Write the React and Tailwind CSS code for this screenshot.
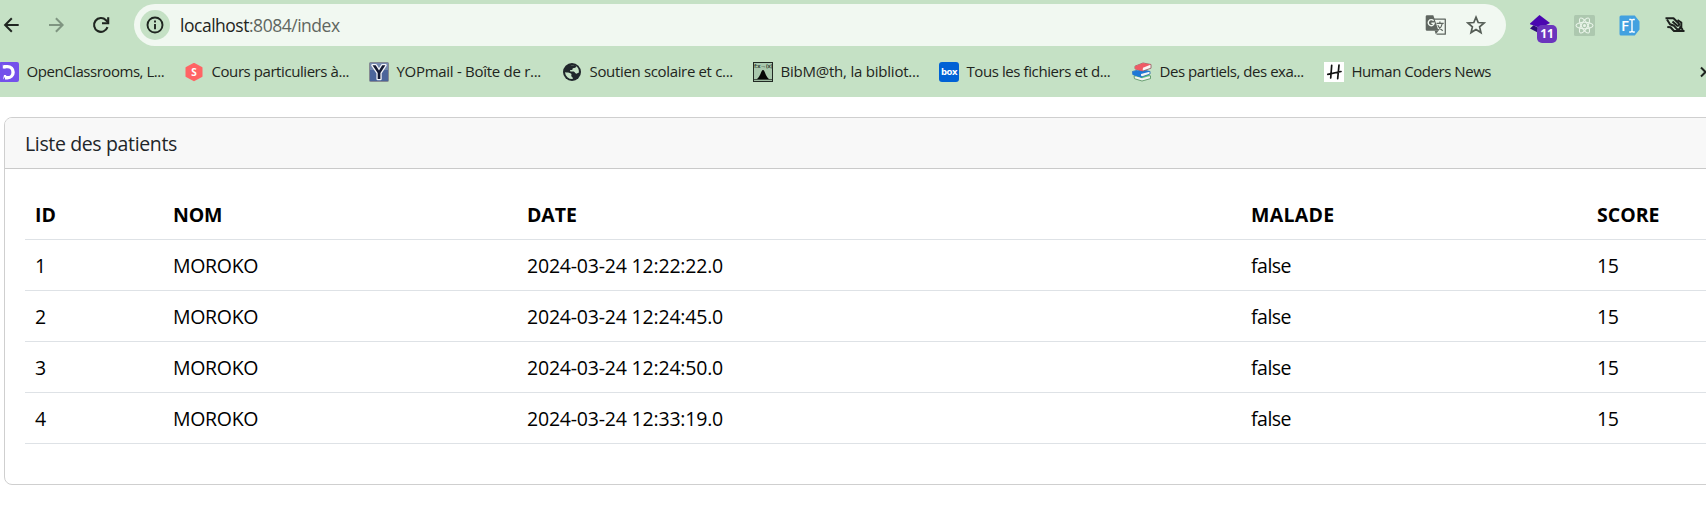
import React from "react";

const UI = "font-['Open_Sans','Noto_Sans',sans-serif]";

function BackIcon() {
  return (
    <svg className="block h-5 w-5" viewBox="0 0 20 20" fill="none" stroke="#1f2520" strokeWidth="2">
      <path d="M18.700 10H5.500M11.800 3.300L5.100 10l6.700 6.700" />
    </svg>
  );
}

function ForwardIcon() {
  return (
    <svg className="block h-5 w-5" viewBox="0 0 20 20" fill="none" stroke="#7f9581" strokeWidth="2">
      <path d="M4 10h13.200M10.900 3.300l6.700 6.700-6.700 6.700" />
    </svg>
  );
}

function ReloadIcon() {
  return (
    <svg className="block h-5 w-5" viewBox="0 0 20 20" fill="none" stroke="#1f2520" strokeWidth="2.100">
      <path d="M17.500 12.200A6.900 6.900 0 1 1 16 5.200L18 7.400" />
      <path d="M18.200 2.200v6h-6.200" />
    </svg>
  );
}

function InfoIcon() {
  return (
    <svg className="block h-5 w-5" viewBox="0 0 20 20" fill="none" stroke="#1f2520">
      <circle cx="10" cy="10" r="7.500" strokeWidth="1.900" />
      <path d="M10 9v5.200M10 5.600v2" strokeWidth="1.900" />
    </svg>
  );
}

function TranslateIcon() {
  return (
    <svg className="block h-[22px] w-[22px]" viewBox="0 0 22 22" fill="none">
      <path d="M9 5.200h11.300v15H11.500" stroke="#5f6660" strokeWidth="1.300" strokeLinejoin="round" />
      <path d="M2 1.200h6.300l5.200 15.600H2A1.300 1.300 0 0 1 .7 15.500V2.500A1.300 1.300 0 0 1 2 1.200z" fill="#5f6660" />
      <path d="M13.500 16.800L10.800 20.300 9.700 16.800z" fill="#5f6660" />
      <path d="M8.600 6.800A3 3 0 1 0 9.200 9.200H6.400" stroke="#f1f8f1" strokeWidth="1.400" />
      <path d="M11.500 9.300H18.700M14.900 7.600v1.700M17.300 9.500c-.5 3-2 5-4.300 6.800M12.800 11.200c1 2.300 2.600 4 5 5.600" stroke="#5f6660" strokeWidth="1.200" />
    </svg>
  );
}

function StarIcon() {
  return (
    <svg className="block h-5 w-5" viewBox="0 0 20 20" fill="none" stroke="#555d56" strokeWidth="1.700">
      <path d="M10 2.200l2.200 5.300 5.900.5-4.500 3.900 1.400 5.700L10 14.600l-5 3 1.400-5.700L1.900 8l5.900-.5z" />
    </svg>
  );
}

function LayersBadge() {
  return (
    <div className="relative mt-[8px] h-7 w-7 shrink-0">
      <svg className="block h-7 w-7" viewBox="0 0 28 28">
        <path d="M0 13.500L3.500 10.200 10.500 14v5z" fill="#2c0a78" />
        <path d="M9.500 0L20 8 10.500 13-.5 9z" fill="#4a06b0" />
      </svg>
      <div className={`absolute left-[7px] top-[10px] flex h-[18px] w-5 items-center justify-center rounded-[5px] bg-[#6b35bd] text-[12px] font-bold leading-none text-white ${UI}`}>
        11
      </div>
    </div>
  );
}

function ReactIcon() {
  return (
    <svg className="block h-[21px] w-[21px]" viewBox="0 0 21 21" fill="none" stroke="#e9f4e9" strokeWidth="1.100">
      <rect width="21" height="21" rx="1.500" fill="#adc8af" stroke="none" />
      <ellipse cx="10.500" cy="10.500" rx="8.500" ry="3.200" />
      <ellipse cx="10.500" cy="10.500" rx="8.500" ry="3.200" transform="rotate(60 10.500 10.500)" />
      <ellipse cx="10.500" cy="10.500" rx="8.500" ry="3.200" transform="rotate(120 10.500 10.500)" />
      <circle cx="10.500" cy="10.500" r="1.500" fill="#e9f4e9" stroke="none" />
    </svg>
  );
}

function FontTagIcon() {
  return (
    <div className="relative h-[21px] w-[21px]">
      <svg className="block h-[21px] w-[21px]" viewBox="0 0 21 21" fill="none">
        <path d="M2 .500h13.800L20.500 6.500v8L15.800 20.500H2A1.500 1.500 0 0 1 .500 19V2A1.500 1.500 0 0 1 2 .500z" fill="#43a1e0" />
        <path d="M10.200 4.500h1.700l1.100.8 1.100-.8h1.700M10.200 17h1.700l1.100-.8 1.100.8h1.700M13 5v11.500" stroke="#fff" strokeWidth="1.400" />
      </svg>
      <span className={`absolute left-[2px] top-[3px] text-[15px] font-semibold leading-[15px] text-white ${UI}`}>F</span>
    </div>
  );
}

function WaveIcon() {
  return (
    <svg className="block h-[18px] w-5" viewBox="0 0 20 18" fill="none" stroke="#1d211e" strokeWidth="2" strokeLinejoin="round">
      <path d="M.5 2.300H8.500L13.800 7.500c.8 1.300 0 2.500-1.500 2.300L7.500 5.500" />
      <path d="M2 3.500L5 8.200l4 1.600 3.200 3.500h2.200c1-.8 1-2 .4-3" />
      <path d="M12.500 4.200l3.800 2.300v5.300l1.500 2.200" />
      <path d="M2.300 11l3.200.3 3.500 3.700H19.500" />
    </svg>
  );
}

function OpenClassroomsIcon() {
  return (
    <svg className="block h-5 w-5" viewBox="0 0 20 20">
      <rect width="20" height="20" rx="2" fill="#7451eb" />
      <path d="M4.600 4.600H8.500a5.600 5.600 0 0 1 0 11.200H6" fill="none" stroke="#fff" strokeWidth="3.400" />
      <path d="M3.800 2.500l3 4.100H3.800zM4 17.500l3.500-4.500-2.500 0z" fill="#fff" />
    </svg>
  );
}

function HexagonIcon() {
  return (
    <div className="relative h-5 w-5">
      <svg className="block h-5 w-5" viewBox="0 0 20 20">
        <path d="M10 2l7.500 4v8.200l-7.500 4-7.500-4V6z" fill="#ff6464" stroke="#ff6464" strokeWidth="2" strokeLinejoin="round" />
      </svg>
      <span className={`absolute inset-0 text-center text-[10px] font-bold leading-5 text-white ${UI}`}>S</span>
    </div>
  );
}

function YopIcon() {
  return (
    <svg className="block h-5 w-5" viewBox="0 0 20 20">
      <rect x=".5" y=".5" width="19" height="19" rx="1" fill="#4b659a" stroke="#858a91" />
      <rect x="1" y="1" width="18" height="7" fill="#7589ae" />
      <path d="M3.500 3.300h3.200L10 8.600l3.200-5.300h3.200L11.400 11v6H8.700v-6z" fill="#131a33" stroke="#f4f6fa" strokeWidth="2.600" strokeLinejoin="round" paintOrder="stroke" />
    </svg>
  );
}

function GlobeIcon() {
  return (
    <svg className="block h-5 w-5" viewBox="0 0 20 20">
      <circle cx="10" cy="10" r="9" fill="#20262b" />
      <path d="M3 10.200c2 .3 4.500 0 6 1.400 1.200 1.200-.3 2 .5 3 .8.900 1.600.6 1.200 2.500A7.300 7.300 0 0 1 3 10.200z" fill="#c5e1c5" />
      <path d="M8.500 3.200c2-.7 4.300-.2 6 1l-1.200 1.500-2.500.5-.6 1.800H8l.4 1.400 3.300.2c1.400.3 1.200 2 2.700 2.100l2.500-1.200A7.200 7.200 0 0 0 12.500 3.200z" fill="#c5e1c5" />
    </svg>
  );
}

function BibmathIcon() {
  return (
    <div className="relative h-5 w-5">
      <svg className="block h-5 w-5" viewBox="0 0 20 20">
        <rect x=".5" y=".5" width="19" height="19" fill="#a9c8ad" stroke="#222a24" />
        <path d="M3 17.500C7 16.500 8 8 10 8s3 8.500 7 9.500z" fill="#050505" />
        <path d="M1 17.600h18" stroke="#3b463d" />
      </svg>
      <span className={`absolute left-[1px] top-[1px] whitespace-nowrap text-[6px] font-semibold leading-[7px] tracking-[-0.3px] text-[#28332a] ${UI}`}>f:x→(x)</span>
    </div>
  );
}

function BoxIcon() {
  return (
    <div className={`flex h-5 w-5 items-center justify-center rounded-[3px] bg-[#0061d5] pb-px text-[9.5px] font-bold leading-none tracking-[-0.5px] text-white ${UI}`}>
      box
    </div>
  );
}

function BooksIcon() {
  return (
    <svg className="block h-5 w-5" viewBox="0 0 20 20" strokeLinejoin="round">
      <path d="M2 14.200l7-1.500 9.500 1.200v2.700L10 19l-7.500-2.300z" fill="#f2f2ee" stroke="#4d8d59" strokeWidth=".8" />
      <path d="M1.500 13.500l8.500 2.700 8.500-2.500-7-1.500z" fill="#5fc97c" />
      <path d="M.5 9.500L8 7.500l10 2v2.500L9.500 15 1 12.500z" fill="#f4f6f7" stroke="#2261a8" strokeWidth=".8" />
      <path d="M.5 9.500L9 12l9.500-2.500-8-2zM.5 9.500V12.700L9.500 15.500l1-.4-1.500-1.500V12z" fill="#1e78d6" />
      <path d="M3 4.200L11 1l8 1.500v3.700L11 9 3 6.800z" fill="#faf5f5" stroke="#8d5158" strokeWidth=".8" />
      <path d="M3 4.200L11 1l8 1.500-8 3.300zM3 4.200v2.800L10.500 9.200l.5-3.400z" fill="#ef5b66" />
    </svg>
  );
}

function HumanCodersIcon() {
  return (
    <svg className="block h-5 w-5" viewBox="0 0 20 20" fill="none" stroke="#111" strokeWidth="1.700" strokeLinecap="round">
      <rect width="20" height="20" fill="#fff" stroke="none" />
      <path d="M7.700 3.300L6.700 16M15 3l-1.300 13.700M3.800 12.300L17 9.500" />
    </svg>
  );
}

const bookmarks = [
  { label: "OpenClassrooms, L...", icon: OpenClassroomsIcon, width: "w-[185px]", text: "tracking-[-0.46px]" },
  { label: "Cours particuliers à...", icon: HexagonIcon, width: "w-[185px]", text: "tracking-[-0.43px]" },
  { label: "YOPmail - Boîte de r...", icon: YopIcon, width: "w-[193px]", text: "tracking-[-0.29px]" },
  { label: "Soutien scolaire et c...", icon: GlobeIcon, width: "w-[191px]", text: "tracking-[-0.34px]" },
  { label: "BibM@th, la bibliot...", icon: BibmathIcon, width: "w-[186px]", text: "tracking-[-0.22px]" },
  { label: "Tous les fichiers et d...", icon: BoxIcon, width: "w-[193px]", text: "tracking-[-0.41px]" },
  { label: "Des partiels, des exa...", icon: BooksIcon, width: "w-[192px]", text: "tracking-[-0.46px]" },
  { label: "Human Coders News", icon: HumanCodersIcon, width: "w-[180px]", text: "tracking-[-0.46px]" },
];

const patients = [
  { id: 1, date: "2024-03-24 12:22:22.0" },
  { id: 2, date: "2024-03-24 12:24:45.0" },
  { id: 3, date: "2024-03-24 12:24:50.0" },
  { id: 4, date: "2024-03-24 12:33:19.0" },
];

function Toolbar() {
  return (
    <div className="flex h-[50px] items-center">
      <div className="flex w-[134px] shrink-0 items-center gap-[25px]">
        <BackIcon />
        <ForwardIcon />
        <ReloadIcon />
      </div>
      <div className="flex h-[42px] w-[1372px] shrink-0 items-center rounded-full bg-[#f1f8f1] pl-1.5">
        <div className="flex h-[30px] w-[30px] items-center justify-center rounded-full bg-[#c5e1c5]">
          <InfoIcon />
        </div>
        <div className="ml-[10px] text-[17.5px] leading-6 tracking-[-0.48px] text-[#1f2520]">
          localhost<span className="text-[#5f6660]">:8084/index</span>
        </div>
        <div className="ml-auto mr-5 flex items-center gap-[19px]">
          <TranslateIcon />
          <StarIcon />
        </div>
      </div>
      <div className="ml-6 flex items-center">
        <LayersBadge />
        <div className="ml-4"><ReactIcon /></div>
        <div className="ml-6"><FontTagIcon /></div>
        <div className="ml-[25px]"><WaveIcon /></div>
      </div>
    </div>
  );
}

function BookmarkBar() {
  return (
    <div className="flex h-[47px] items-center overflow-hidden pb-[3px]">
      <div className="-ml-px flex">
        {bookmarks.map(({ label, icon: Icon, width, text }) => (
          <div key={label} className={`flex shrink-0 items-center gap-[7.5px] ${width}`}>
            <Icon />
            <span className={`whitespace-nowrap pb-[2px] text-[15px] leading-5 text-[#1f2520] ${text}`}>{label}</span>
          </div>
        ))}
      </div>
      <svg className="ml-auto h-3 w-[6px] shrink-0" viewBox="0 0 6 12" fill="none" stroke="#1f2520" strokeWidth="2">
        <path d="M1 1.500L5.500 6 1 10.500" />
      </svg>
    </div>
  );
}

function PatientsCard() {
  return (
    <div className="ml-1 mt-5 h-[368px] w-[1760px] rounded-[8px] border border-[#cfcfcf] bg-white">
      <div className="h-[51px] rounded-t-[7px] border-b border-[#cacaca] bg-[#f8f8f8] pl-5 text-[19.5px] leading-[52px] tracking-[-0.36px] text-[#212529]">
        Liste des patients
      </div>
      <div className="pl-5 pt-5">
        <table className="w-[1730px] table-fixed border-separate border-spacing-0 text-left text-[19.5px] text-black [&_td]:border-b [&_td]:border-[#dee2e6] [&_td]:px-[10px] [&_td]:pb-0 [&_td]:pt-[2px] [&_th]:border-b [&_th]:border-[#dee2e6] [&_th]:px-[10px] [&_th]:pb-0 [&_th]:pt-[2px]">
          <colgroup>
            <col className="w-[138px]" />
            <col className="w-[354px]" />
            <col className="w-[724px]" />
            <col className="w-[346px]" />
            <col />
          </colgroup>
          <thead>
            <tr className="h-[51px]">
              <th className="font-bold">ID</th>
              <th className="font-bold tracking-[-0.2px]">NOM</th>
              <th className="font-bold tracking-[-0.1px]">DATE</th>
              <th className="font-bold tracking-[0.3px]">MALADE</th>
              <th className="font-bold">SCORE</th>
            </tr>
          </thead>
          <tbody>
            {patients.map(({ id, date }) => (
              <tr key={id} className="h-[51px]">
                <td>{id}</td>
                <td className="tracking-[-0.3px]">MOROKO</td>
                <td className="tracking-[-0.2px]">{date}</td>
                <td className="tracking-[-0.5px]">false</td>
                <td className="tracking-[-0.3px]">15</td>
              </tr>
            ))}
          </tbody>
        </table>
      </div>
    </div>
  );
}

export default function App() {
  return (
    <div className={`h-[517px] w-[1706px] overflow-hidden bg-white ${UI}`}>
      <header className="h-[97px] bg-[#c5e1c5]">
        <Toolbar />
        <BookmarkBar />
      </header>
      <PatientsCard />
    </div>
  );
}
